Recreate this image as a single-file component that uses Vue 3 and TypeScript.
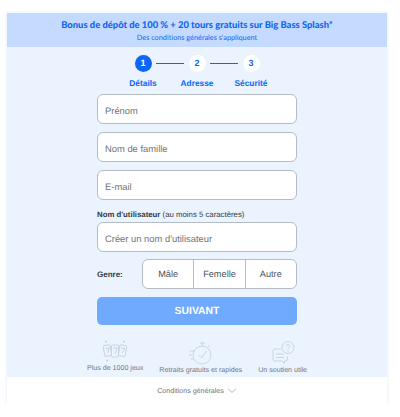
<script setup lang="ts">
const steps = [
  { n: 1, label: 'Détails', active: true },
  { n: 2, label: 'Adresse', active: false },
  { n: 3, label: 'Sécurité', active: false },
]
const fields = ['Prénom', 'Nom de famille', 'E-mail']
const genders = ['Mâle', 'Femelle', 'Autre']
</script>

<template>
  <div class="card">
    <header class="promo">
      <div class="promo__title">Bonus de dépôt de 100 % + 20 tours gratuits sur Big Bass Splash*</div>
      <div class="promo__sub">Des conditions générales s'appliquent</div>
    </header>

    <div class="body">
      <div class="steps">
        <div v-for="s in steps" :key="s.n" class="step">
          <span :class="['step__dot', { 'step__dot--active': s.active }]">{{ s.n }}</span>
          <span class="step__label">{{ s.label }}</span>
        </div>
      </div>

      <form class="form" @submit.prevent>
        <input v-for="f in fields" :key="f" class="input" type="text" :placeholder="f" />

        <label class="username">
          <span class="username__text"><b>Nom d'utilisateur</b> (au moins 5 caractères)</span>
          <input class="input" type="text" placeholder="Créer un nom d'utilisateur" />
        </label>

        <div class="gender">
          <span class="gender__label">Genre:</span>
          <div class="gender__options">
            <span v-for="g in genders" :key="g" class="gender__option">{{ g }}</span>
          </div>
        </div>

        <button type="submit" class="submit">SUIVANT</button>
      </form>

      <div class="perks">
        <div class="perk">
          <svg width="26" height="22" viewBox="0 0 26 22" fill="none" stroke="#c6d0e0" stroke-width="0.900">
            <g transform="rotate(-10 6 11)"><rect x="2" y="5" width="7" height="11" rx="1" /><path d="M3.500 8h4l-2 5" /></g>
            <rect x="9.500" y="5" width="7" height="12" rx="1" fill="#ebf3ff" />
            <path d="M11 8h4l-2 6" />
            <g transform="rotate(10 20 11)"><rect x="17" y="5" width="7" height="11" rx="1" /><path d="M18.500 8h4l-2 5" /></g>
            <path d="M4 0.500v2M3 1.500h2M22 0.500v2M21 1.500h2M5 19.500v2M4 20.500h2" />
          </svg>
          <span>Plus de 1000 jeux</span>
        </div>
        <div class="perk perk--low">
          <svg width="24" height="26" viewBox="0 0 24 26" fill="none" stroke="#c6d0e0" stroke-width="0.900">
            <circle cx="13" cy="15" r="9" />
            <path d="M9.500 15l3 3 5-7M11 3h5M13.500 3v3M19 5l2 2M1 11h5M0 15h3M2 19h3" />
          </svg>
          <span>Retraits gratuits et rapides</span>
        </div>
        <div class="perk perk--mid">
          <svg width="24" height="24" viewBox="0 0 24 24" fill="none" stroke="#c6d0e0" stroke-width="0.900">
            <path d="M10 9H4a2 2 0 0 0-2 2v8a2 2 0 0 0 2 2h7l2.500 2.500V21h1a2 2 0 0 0 2-2v-3" />
            <circle cx="17" cy="7.500" r="6" />
            <path d="M15.300 6a1.800 1.800 0 1 1 2.700 1.600c-.7.400-1 .8-1 1.500M17 10.500v1M5 14h8M5 17.500h8" />
          </svg>
          <span>Un soutien utile</span>
        </div>
      </div>
    </div>

    <footer class="terms">
      Conditions générales
      <svg width="10" height="6" viewBox="0 0 10 6" fill="none" stroke="#9aa3af" stroke-width="0.800">
        <path d="M1 0.500 5 4.500l4-4" />
      </svg>
    </footer>
  </div>
</template>

<style scoped>
.card {
  width: 380px;
  height: 391px;
  margin: 13px 0 0 7px;
  display: flex;
  flex-direction: column;
  font-family: "Liberation Sans", Arial, sans-serif;
  text-rendering: geometricPrecision;
  background: #ebf3ff;
  box-shadow: 0 0 3px rgba(120, 160, 230, 0.25);
}

.promo {
  height: 34px;
  flex: none;
  background: #c5daff;
  text-align: center;
  color: #0d66f5;
}

.promo__title {
  padding-top: 6px;
  font-family: Lato, sans-serif;
  font-size: 9.400px;
  line-height: 13px;
  font-weight: 900;
}

.promo__sub {
  margin-top: 1px;
  font-family: Lato, sans-serif;
  font-size: 7.300px;
  line-height: 10px;
}

.body {
  flex: 1;
  display: flex;
  flex-direction: column;
  align-items: center;
}

.steps {
  margin-top: 8px;
  display: flex;
  gap: 18px;
}

.step {
  position: relative;
  width: 36px;
  display: flex;
  flex-direction: column;
  align-items: center;
  gap: 6px;
}

.step:not(:last-child)::after {
  content: '';
  position: absolute;
  top: 7.500px;
  left: 31px;
  width: 28px;
  height: 1.500px;
  background: #0d66f5;
}

.step__dot {
  width: 17px;
  height: 17px;
  border-radius: 50%;
  background: #fff;
  color: #0d66f5;
  font-size: 9px;
  font-weight: 700;
  line-height: 17px;
  text-align: center;
}

.step__dot--active {
  background: #0d66f5;
  color: #fff;
}

.step__label {
  color: #0d66f5;
  font-size: 8.400px;
  font-weight: 700;
  line-height: 10px;
  white-space: nowrap;
}

.form {
  width: 200px;
  margin-top: 6px;
  display: flex;
  flex-direction: column;
  gap: 8px;
}

.input {
  box-sizing: border-box;
  width: 100%;
  height: 30px;
  padding: 2px 7px 0;
  border: 1px solid #b5bcc4;
  border-radius: 6px;
  background: #fff;
  font: 9.400px "Liberation Sans", Arial, sans-serif;
  text-rendering: geometricPrecision;
  outline: none;
}

.input::placeholder {
  color: #6f7479;
  opacity: 1;
}

.username {
  display: flex;
  flex-direction: column;
  gap: 2px;
  margin-top: 1px;
}

.username__text {
  font-size: 7.800px;
  line-height: 11px;
  color: #333a42;
  white-space: nowrap;
}

.gender {
  display: flex;
  align-items: center;
  justify-content: space-between;
  margin-top: -1px;
}

.gender__label {
  font-size: 8px;
  font-weight: 700;
  color: #333a42;
}

.gender__options {
  box-sizing: border-box;
  width: 155px;
  height: 30px;
  display: flex;
  border: 1px solid #b5bcc4;
  border-radius: 6px;
  background: #fff;
}

.gender__option {
  flex: 1;
  display: flex;
  align-items: center;
  justify-content: center;
  font-size: 9.200px;
  color: #4c5258;
}

.gender__option + .gender__option {
  border-left: 1px solid #b5bcc4;
}

.submit {
  height: 28px;
  border: none;
  border-radius: 5px;
  background: #70aaff;
  color: #fff;
  font: 700 10.400px "Liberation Sans", Arial, sans-serif;
  text-rendering: geometricPrecision;
}

.perks {
  margin-top: 15px;
  display: flex;
  gap: 16px;
  align-items: flex-start;
}

.perk {
  display: flex;
  flex-direction: column;
  align-items: center;
  gap: 2px;
  font-size: 7.100px;
  line-height: 9px;
  color: #6f7885;
  white-space: nowrap;
}

.perk--low {
  gap: 0;
}

.terms {
  height: 27px;
  flex: none;
  background: #fff;
  display: flex;
  align-items: center;
  justify-content: center;
  gap: 3px;
  font-size: 7.100px;
  color: #6d7480;
}
</style>

<style>
body {
  background: #fff;
}
</style>
